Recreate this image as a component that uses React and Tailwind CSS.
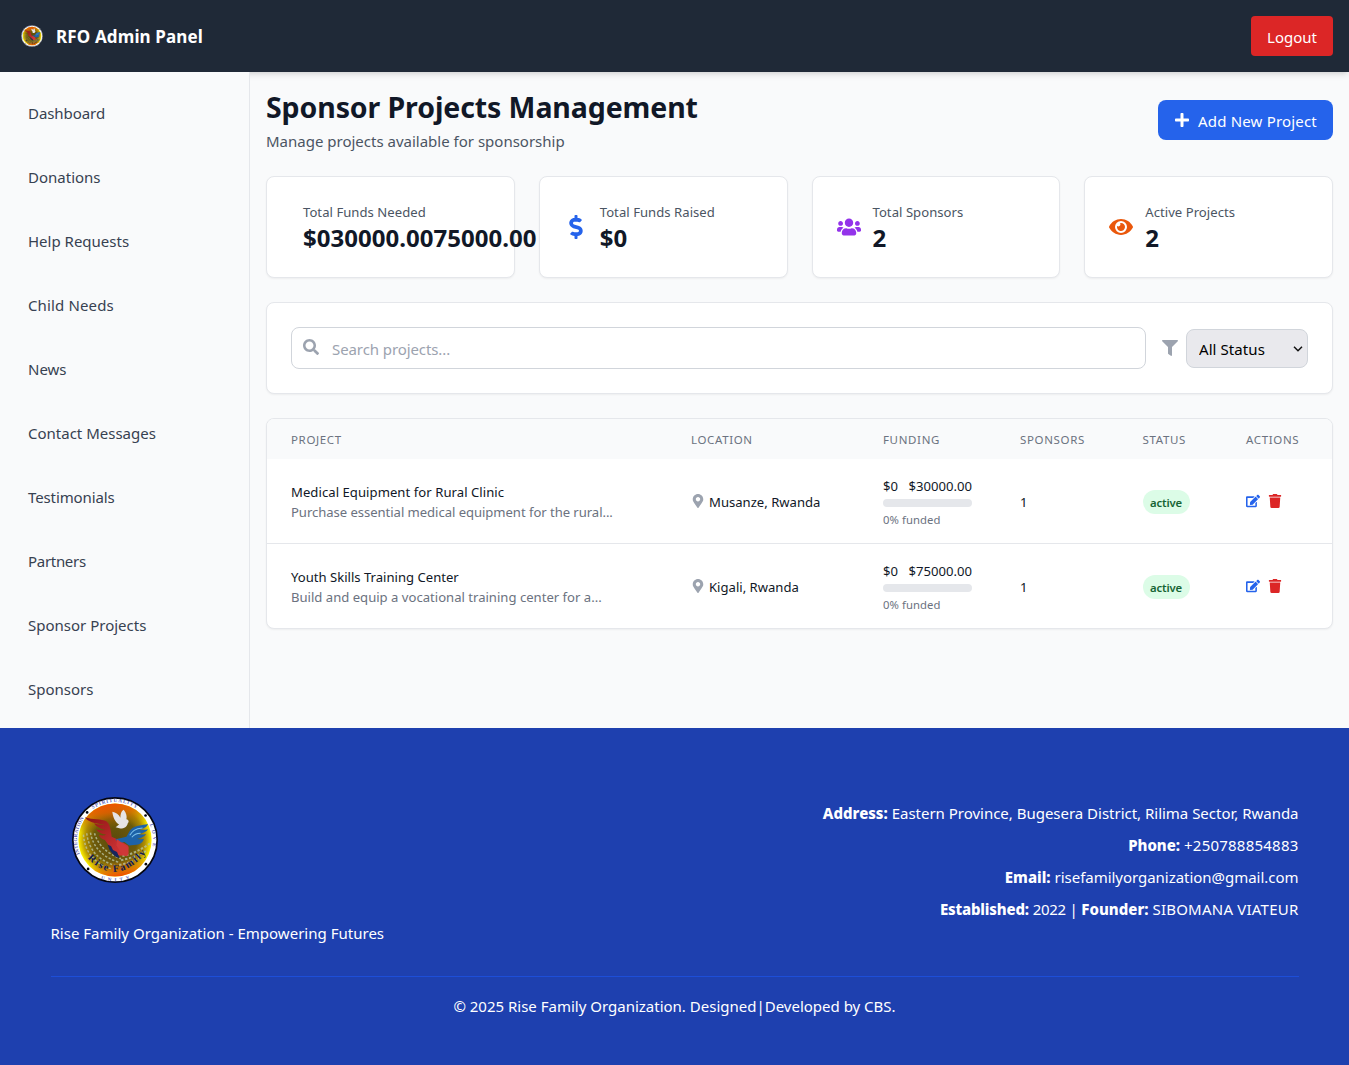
import {
  FaPlus, FaDollarSign, FaUsers, FaEye, FaSearch, FaFilter, FaMapMarkerAlt, FaEdit, FaTrash,
} from 'react-icons/fa';

const navItems = [
  ['Dashboard', 'tracking-[-0.004em]'],
  ['Donations', ''],
  ['Help Requests', ''],
  ['Child Needs', 'tracking-[0.009em]'],
  ['News', ''],
  ['Contact Messages', ''],
  ['Testimonials', 'tracking-[-0.007em]'],
  ['Partners', 'tracking-[-0.02em]'],
  ['Sponsor Projects', ''],
  ['Sponsors', ''],
];

const stats = [
  { label: 'Total Funds Needed', value: '$030000.0075000.00' },
  { label: 'Total Funds Raised', value: '$0', icon: FaDollarSign, color: 'text-[#2563eb]' },
  { label: 'Total Sponsors', value: '2', icon: FaUsers, color: 'text-[#9333ea]' },
  { label: 'Active Projects', value: '2', icon: FaEye, color: 'text-[#ea580c]' },
];

const columns = ['Project', 'Location', 'Funding', 'Sponsors', 'Status', 'Actions'];

const projects = [
  {
    name: 'Medical Equipment for Rural Clinic',
    text: 'Purchase essential medical equipment for the rural...',
    place: 'Musanze, Rwanda',
    goal: '$30000.00',
    tracking: 'tracking-[0.004em]',
    textTracking: 'tracking-[-0.004em]',
  },
  {
    name: 'Youth Skills Training Center',
    text: 'Build and equip a vocational training center for a...',
    place: 'Kigali, Rwanda',
    goal: '$75000.00',
    tracking: '',
    textTracking: '',
  },
];

function Logo({ className, id }) {
  return (
    <svg viewBox="0 0 256 256" className={className} aria-hidden="true">
      <defs>
        <radialGradient id={id + 'g'} cx="0.5" cy="0.5" r="0.5">
          <stop offset="0" stopColor="#5a4a0c" />
          <stop offset="0.6" stopColor="#6d5a0a" />
          <stop offset="0.82" stopColor="#b08e04" />
          <stop offset="1" stopColor="#fff200" />
        </radialGradient>
        <linearGradient id={id + 't'} x1="0.3" y1="0" x2="0.45" y2="1">
          <stop offset="0" stopColor="#f04a00" />
          <stop offset="0.14" stopColor="#dc5a00" stopOpacity="0.85" />
          <stop offset="0.36" stopColor="#8a6a00" stopOpacity="0" />
          <stop offset="0.8" stopColor="#c06000" stopOpacity="0" />
          <stop offset="1" stopColor="#f05000" />
        </linearGradient>
        <linearGradient id={id + 'r'} x1="0" y1="0" x2="1" y2="1">
          <stop offset="0" stopColor="#8e1414" />
          <stop offset="1" stopColor="#d8393b" />
        </linearGradient>
        <path id={id + 'top'} d="M62 36A113 113 0 0 1 194 36" />
        <path id={id + 'left'} d="M23 170A113 113 0 0 1 38 60" />
        <path id={id + 'right'} d="M231 82A113 113 0 0 1 239 152" />
        <path id={id + 'bottom'} d="M86 244A124 124 0 0 0 176 242" />
        <path id={id + 'name'} d="M46 182Q134 274 228 158" />
      </defs>
      <circle cx="128" cy="128" r="125.5" fill="#fff" stroke="#05060f" strokeWidth="5" />
      <circle cx="128" cy="128" r="109" fill={`url(#${id}g)`} />
      <circle cx="128" cy="128" r="109" fill={`url(#${id}t)`} />
      <g fill="none" stroke="#b9c4a0" strokeWidth="4.5" strokeDasharray="7 5" opacity="0.8">
        <path d="M34 112Q40 190 118 214" />
        <path d="M44 108Q52 180 128 204" />
        <path d="M55 106Q66 170 138 194" />
        <path d="M67 108Q82 160 146 184" />
        <path d="M150 176Q190 168 232 138" strokeWidth="6" />
        <path d="M146 188Q188 180 222 160" strokeWidth="6" />
        <path d="M140 202Q180 196 208 178" strokeWidth="6" />
      </g>
      <path
        d="M38 60c24 8 50 4 64 12 12 8 14 30 16 46l22 10 26 16c6 8 2 16-6 16 2 10-4 16-12 14-12 2-22-10-30-18l-20-28c-12-4-16-10-18-16 8 3 16 3 22 0-16-2-26-8-30-16 10 4 20 4 28 2-18-4-30-12-34-20 12 4 22 6 32 4C66 78 48 74 38 60z"
        fill={`url(#${id}r)`}
      />
      <path
        d="M226 80c-18 4-34 4-46 12-10 8-12 18-18 26l-32 8 8 12 18-4 14 10 22-2c14-2 20-10 22-18-8 2-14 2-20 0 14-2 24-8 26-14-8 2-16 2-24 0 16-2 28-8 30-14-8 2-18 2-26 0 14-2 24-8 26-16z"
        fill="#1d62a8"
      />
      <path d="M210 92c-24 2-30 10-38 22M204 108c-14 0-20 4-26 12" fill="none" stroke="#7fc4ee" strokeWidth="3" />
      <path d="M134 126l26 18c8 6 12 20 6 30-8 4-16 0-20-8l-14-22z" fill="#cf3838" />
      <path d="M106 142l10 4 6 12 12 6 8 18-12-4-10-10-8-10z" fill="#17265e" />
      <path
        d="M120 44c10 2 20 8 24 18 0-10 2-20 10-24 8 10 10 20 8 28 8 2 8 8 4 12-2 10-10 16-22 16l-14-4 10-8c-12-8-18-22-20-38z"
        fill="#e6e4e4"
      />
      <g fontFamily='"Liberation Serif", serif' fontWeight="700" fontSize="15" fill="#3a3fae" opacity="0.85">
        <text><textPath href={`#${id}top`} textLength="138">SPIRITUALITY</textPath></text>
        <text><textPath href={`#${id}left`} textLength="112">INTEGRATION</textPath></text>
        <text><textPath href={`#${id}right`} textLength="66">LOVE</textPath></text>
        <text><textPath href={`#${id}bottom`} textLength="88">UNITY</textPath></text>
      </g>
      <text fontFamily='"Liberation Serif", serif' fontWeight="700" fontSize="30" fill="#101a52">
        <textPath href={`#${id}name`} textLength="206">Rise Family</textPath>
      </text>
      <g fill="#05060f">
        <circle cx="45" cy="46" r="4" />
        <circle cx="219" cy="55" r="4" />
        <circle cx="48" cy="214" r="4" />
        <circle cx="220" cy="200" r="4" />
      </g>
    </svg>
  );
}

function Header() {
  return (
    <header className="flex h-[72px] items-center justify-between bg-[#1f2937] px-4 text-white shadow-[0_4px_6px_-1px_rgba(0,0,0,0.1),0_2px_4px_-2px_rgba(0,0,0,0.1)]">
      <div className="flex items-center gap-[13px] pl-[5px]">
        <Logo id="h" className="h-[22px] w-[22px]" />
        <span className="pt-0.5 text-[17px] leading-7 font-bold tracking-[0.008em]">RFO Admin Panel</span>
      </div>
      <button className="flex h-10 w-[82px] items-center justify-center rounded bg-[#dc2626] pt-[3px] text-[15px]">
        Logout
      </button>
    </header>
  );
}

function Sidebar() {
  return (
    <aside className="z-10 w-[250px] shrink-0 border-r border-[#e5e7eb] bg-[#f9fafb] py-2">
      <nav className="flex flex-col">
        {navItems.map(([label, tracking]) => (
          <a key={label} className={`flex h-16 items-center pt-[3px] pl-7 text-[15px] text-[#374151] ${tracking}`}>
            {label}
          </a>
        ))}
      </nav>
    </aside>
  );
}

const card = 'rounded-lg border border-[#e5e7eb] bg-white shadow-[0_1px_2px_0_rgba(0,0,0,0.05)]';

function StatCard({ label, value, icon: Icon, color }) {
  return (
    <div className={`${card} flex h-[102px] items-center px-6`}>
      {Icon && <Icon className={`h-6 w-6 shrink-0 ${color}`} />}
      <div className="ml-3 w-0 grow pt-0.5 whitespace-nowrap">
        <p className="pt-px text-[13.1px] leading-[19px] tracking-[0.003em] text-[#4b5563]">{label}</p>
        <p className="text-[24px] leading-8 font-bold tracking-[0.001em] text-[#111827]">{value}</p>
      </div>
    </div>
  );
}

function Filters() {
  return (
    <div className={`${card} mt-6 flex h-[92px] items-center px-6`}>
      <div className="relative grow">
        <FaSearch className="absolute top-3 left-3 h-4 w-4 text-[#9ca3af]" />
        <input
          placeholder="Search projects..."
          className="block h-[42px] w-full rounded-lg border border-[#d1d5db] pt-px pl-10 text-[15px] tracking-[-0.006em] placeholder:text-[#9ca3af]"
        />
      </div>
      <FaFilter className="mr-2 ml-4 h-4 w-4 text-[#9ca3af]" />
      <div className="relative">
        <select className="block h-[39px] w-[122px] appearance-none rounded-lg border border-[#d1d5db] bg-[#e9e9ed] pt-0.5 pl-3 text-[15px] tracking-[0.005em] text-black">
          <option>All Status</option>
        </select>
        <svg viewBox="0 0 10 6" className="pointer-events-none absolute top-[17px] right-[5px] h-[6px] w-[10px]">
          <path d="M1 0.8L5 4.8L9 0.8" fill="none" stroke="#111" strokeWidth="1.5" />
        </svg>
      </div>
    </div>
  );
}

function ProjectTable() {
  return (
    <div className={`${card} mt-6 overflow-hidden`}>
      <table className="w-full table-fixed text-[13.1px] leading-5 text-[#111827]">
        <colgroup>
          <col className="w-[400px]" />
          <col className="w-[192px]" />
          <col className="w-[137px]" />
          <col className="w-[122.5px]" />
          <col className="w-[103.5px]" />
          <col />
        </colgroup>
        <thead className="bg-[#f9fafb]">
          <tr className="h-10">
            {columns.map((c) => (
              <th key={c} className="px-6 pt-0.5 text-left text-[11.5px] leading-4 font-normal tracking-[0.056em] text-[#6b7280] uppercase">
                {c}
              </th>
            ))}
          </tr>
        </thead>
        <tbody className="divide-y divide-[#e5e7eb]">
          {projects.map((p) => (
            <tr key={p.name}>
              <td className="px-6 whitespace-nowrap">
                <div className={`pt-0.5 leading-[19px] ${p.tracking}`}>{p.name}</div>
                <div className={`pt-px leading-[19px] text-[#6b7280] ${p.textTracking}`}>{p.text}</div>
              </td>
              <td className="px-6 whitespace-nowrap">
                <div className="flex items-center">
                  <FaMapMarkerAlt className="mr-1 h-3.5 w-3.5 text-[#9ca3af]" />
                  <span className="pt-0.5">{p.place}</span>
                </div>
              </td>
              <td className="px-6 py-4 whitespace-nowrap">
                <div className="flex justify-between pt-0.5 leading-[18px]">
                  <span>$0</span>
                  <span>{p.goal}</span>
                </div>
                <div className="mt-1 h-2 rounded-full bg-[#e5e7eb]" />
                <div className="mt-1 pt-px text-[11.3px] leading-[15px] tracking-[0.006em] text-[#6b7280]">0% funded</div>
              </td>
              <td className="px-6 pt-0.5">1</td>
              <td className="px-6 pt-0.5">
                <span className="flex h-6 w-[47px] items-center justify-center rounded-full bg-[#dcfce7] pt-px text-[11.3px] font-semibold tracking-[-0.012em] text-[#166534]">
                  active
                </span>
              </td>
              <td className="px-6">
                <div className="flex gap-2">
                  <FaEdit className="h-3.5 w-3.5 text-[#2563eb]" />
                  <FaTrash className="h-3.5 w-3.5 text-[#dc2626]" />
                </div>
              </td>
            </tr>
          ))}
        </tbody>
      </table>
    </div>
  );
}

function Footer() {
  return (
    <footer className="h-[337px] bg-[#1e40af] px-[50.5px] text-[15px] leading-6 text-white">
      <div className="flex h-[248px] justify-between">
        <div className="pt-[69px]">
          <Logo id="f" className="ml-[21.5px] h-[86px] w-[86px]" />
          <p className="mt-[38px] tracking-[0.001em]">Rise Family Organization - Empowering Futures</p>
        </div>
        <div className="flex flex-col gap-2 pt-[73px] text-right">
          <p><b className="font-extrabold">Address:</b> <span className="tracking-[-0.001em]">Eastern Province, Bugesera District, Rilima Sector, Rwanda</span></p>
          <p><b className="font-extrabold">Phone:</b> <span className="tracking-[0.015em]">+250788854883</span></p>
          <p><b className="font-extrabold">Email:</b> <span className="tracking-[-0.002em]">risefamilyorganization@gmail.com</span></p>
          <p>
            <b className="font-extrabold tracking-[-0.012em]">Established:</b>{' '}
            <span className="tracking-[-0.02em]">2022 |</span> <b className="font-extrabold">Founder:</b>{' '}
            <span className="tracking-[0.015em]">SIBOMANA VIATEUR</span>
          </p>
        </div>
      </div>
      <p className="border-t border-[#1d4ed8] pt-[17px] text-center">
        © 2025 Rise Family Organization. Designed|Developed by CBS.
      </p>
    </footer>
  );
}

export default function App() {
  return (
    <div className="min-h-[1065px] bg-[#f9fafb] font-['Noto_Sans','Open_Sans',sans-serif]">
      <Header />
      <div className="flex h-[656px]">
        <Sidebar />
        <main className="grow p-4">
          <div className="flex h-16 items-center justify-between">
            <div>
              <h1 className="pt-px text-[28.5px] leading-9 font-bold tracking-[-0.0035em] text-[#111827]">Sponsor Projects Management</h1>
              <p className="mt-1 text-[15px] leading-6 text-[#4b5563]">Manage projects available for sponsorship</p>
            </div>
            <button className="flex h-10 w-[175px] items-center gap-2 rounded-lg bg-[#2563eb] px-4 text-[15px] whitespace-nowrap text-white">
              <FaPlus className="h-4 w-4 shrink-0" />
              <span className="pt-0.5 tracking-[0.012em]">Add New Project</span>
            </button>
          </div>
          <div className="mt-6 grid grid-cols-4 gap-6">
            {stats.map((s) => (
              <StatCard key={s.label} {...s} />
            ))}
          </div>
          <Filters />
          <ProjectTable />
        </main>
      </div>
      <Footer />
    </div>
  );
}
